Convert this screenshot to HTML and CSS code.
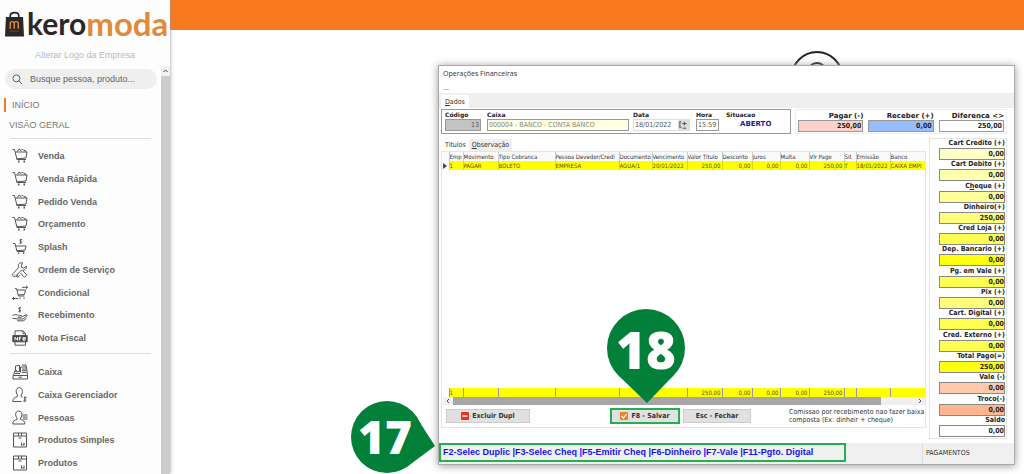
FILE: index.html
```html
<!DOCTYPE html>
<html lang="pt-BR">
<head>
<meta charset="utf-8">
<title>Keromoda - Operações Financeiras</title>
<link rel="stylesheet" href="styles.css">
</head>
<body>
<svg class="defs" aria-hidden="true">
  <symbol id="cart" viewBox="0 0 16 16"><path d="M.5 1.500h2l2.500 10h9M3.500 4h11.500l-1 6-9.500.8M5.500 3.500l1.500-2.500 2 1.500L10.500 1l1.500 1.500 1.500.2.500 1.300"/><path d="M6 13.500h1.500M11.500 13.500h1.500" stroke-width="2"/></symbol>
  <symbol id="cash-cart" viewBox="0 0 16 16"><path d="M1 4.500h2l2 8h7.500M4 7h10l-1 4-8 .7M10 .5C8-.2 7.200 1.700 8.700 2.300S9.500 4.600 7.500 4M8.700 0v5"/><path d="M6 14.300h1.300M11 14.300h1.300" stroke-width="1.600"/></symbol>
  <symbol id="tools" viewBox="0 0 16 16"><path d="M10.500.8C7 .3 5.500 3 6.600 5.600L.9 11.700c-1.400 1.800 1 3.900 2.700 2.500l5.900-6.100c2.800.9 5.400-1.300 4.800-4l-2.500 2-2-.6-.4-2zM8.500 11l3 3.500c1.500 1.300 3.800-.8 2.600-2.300L11 9M2.300 12.800h.7M6 12.500l-1.500 2 1.500.6 2-2"/></symbol>
  <symbol id="swap-cart" viewBox="0 0 16 16"><path d="M3 3.500h1.500l2 7.500h6M5 5h8.500l-1 4.500-6.500.5M10 2.300h5.500M14 .8l1.700 1.500L14 3.800M.5 13.500H6M2 12L.4 13.500 2 15"/><path d="M7.500 13.300h1M11.500 13.300h1" stroke-width="1.600"/></symbol>
  <symbol id="hand" viewBox="0 0 16 16"><path d="M9 .8C7-.2 6 2 7.600 2.600S9 5.200 6.500 4.500M7.700 0v5.500M.5 8.500c3-1.500 4.500-1 6 .2h3c1.200.2.800 1.500-.2 1.600H6M10.500 9.500l3.500-1.700c1-.3 1.600.4.900 1.200L11 12H6l-5.500-.7M5 13.800h6.500l3-2.500"/></symbol>
  <symbol id="nfe" viewBox="0 0 16 16"><path d="M3 6V.8h8l2.500 2.700V6M11 .8v3h2.500M3 12v3.200h10.500V12"/><path class="solid" d="M.8 5.500h14.400v6.300H.8z"/><path class="light" d="M3 10.300V7.200l2.500 3V7.200M7.300 10.500V7.200h2M7.300 8.800h1.600M11 8.900h2.500V7.700H11v2.500h2.500"/></symbol>
  <symbol id="register" viewBox="0 0 16 16"><path d="M1 11.500h14.500V15H1zM1.500 11.500L3 6.500h2M3.500 7.500V2l4-.8v6.500h-4M8.500 3h6l1 8.500M8.500 3v5.500M10 1h4v2M10 5h4M10 6.700h4.300M10 8.400h4.500M3 9.500h5M6.500 13.200h3.500"/></symbol>
  <symbol id="user-cash" viewBox="0 0 16 16"><path d="M7.300.7C3.300.7 3.700 6 5.500 8v1.500C2.500 10.500.8 11.500.8 14.500h8.700M7.300.7c4 0 3.600 5.300 1.800 7.300v1.500l1.500.6M14.500 10.500c-2-1-3.200 1-1.500 1.700s.5 2.600-1.800 1.800M12.900 9.500v5.500"/></symbol>
  <symbol id="user-list" viewBox="0 0 16 16"><path d="M6.800 1C2.800 1 3.200 6.200 5 8v1.500C2 10.300.8 11.200.8 14h12c0-2.800-1.300-3.700-4.200-4.500V8c1.800-1.800 2.200-7-1.800-7zM10.500 5h5M10.500 7h5M11 9h4.500"/></symbol>
  <symbol id="box" viewBox="0 0 16 16"><path d="M1.500 1h13v14h-13zM1.500 4h13M6.500 1v3M9.500 1v3M6.500 6h3M9.500 10.500v2.500M12 10.500v2.500M9 13h3.500"/></symbol>
</svg>

<div class="app">
  <aside class="sidebar">
    <a class="logo" href="#" aria-label="keromoda">
      <svg class="bag" viewBox="0 0 20 27"><path d="M5.500 7.500V4.300C5.500 0 14.500 0 14.500 4.300v3.200" fill="none" stroke="#2b2728" stroke-width="1.800"/><path d="M1 5.500h18L20 26H0z" fill="#2b2728"/><path d="M5.500 18v-5.500c0-2.700 4.200-2.700 4.200 0V18M9.700 12.500c0-2.700 4.300-2.700 4.300 0V18" fill="none" stroke="#e08a3c" stroke-width="1.500"/><path d="M5 20.500h10" stroke="#b06a30" stroke-width="1" stroke-dasharray="1 1"/></svg>
      <span class="kero">kero</span><span class="moda">moda</span>
    </a>
    <a class="change-logo" href="#">Alterar Logo da Empresa</a>
    <div class="side-body">
      <div class="side-content">
        <label class="search">
          <svg viewBox="0 0 12 12"><circle cx="4.800" cy="4.800" r="3.800"/><path d="M7.600 7.600l3.500 3.400"/></svg>
          <input type="text" aria-label="Busca" placeholder="Busque pessoa, produto...">
        </label>
        <nav>
          <a class="top-link active" href="#">INÍCIO</a>
          <a class="top-link" href="#">VISÃO GERAL</a>
          <ul class="menu">
            <li><a href="#"><svg><use href="#cart"/></svg>Venda</a></li>
            <li><a href="#"><svg><use href="#cart"/></svg>Venda Rápida</a></li>
            <li><a href="#"><svg><use href="#cart"/></svg>Pedido Venda</a></li>
            <li><a href="#"><svg><use href="#cart"/></svg>Orçamento</a></li>
            <li><a href="#"><svg><use href="#cash-cart"/></svg>Splash</a></li>
            <li><a href="#"><svg><use href="#tools"/></svg>Ordem de Serviço</a></li>
            <li><a href="#"><svg><use href="#swap-cart"/></svg>Condicional</a></li>
            <li><a href="#"><svg><use href="#hand"/></svg>Recebimento</a></li>
            <li><a href="#"><svg><use href="#nfe"/></svg>Nota Fiscal</a></li>
          </ul>
          <ul class="menu">
            <li><a href="#"><svg><use href="#register"/></svg>Caixa</a></li>
            <li><a href="#"><svg><use href="#user-cash"/></svg>Caixa Gerenciador</a></li>
            <li><a href="#"><svg><use href="#user-list"/></svg>Pessoas</a></li>
            <li><a href="#"><svg><use href="#box"/></svg>Produtos Simples</a></li>
            <li><a href="#"><svg><use href="#box"/></svg>Produtos</a></li>
          </ul>
        </nav>
      </div>
      <div class="side-scroll"><svg viewBox="0 0 8 10"><path d="M2 6l2-2 2 2"/></svg></div>
    </div>
  </aside>
  <main class="desktop">
    <div class="topbar"></div>
    <svg class="avatar" viewBox="0 0 52 52"><circle cx="26" cy="26" r="25"/><circle cx="26" cy="21" r="9"/></svg>
    <section class="window">
      <h1 class="title">Operações Financeiras</h1>
      <div class="menubar">...</div>
      <div class="tabstrip"><button class="tab"><u>D</u>ados</button></div>
      <div class="page">
        <div class="summary">
          <div class="box details">
            <label class="f-code">Código<input class="num" type="text" value="13"></label>
            <label class="f-cash">Caixa<input type="text" value="000004 - BANCO - CONTA BANCO"></label>
            <label class="f-date">Data<span class="date"><input type="text" value="18/01/2022"><button aria-label="Alterar data"><svg viewBox="0 0 11 11"><path d="M1 2h2M1.500 2v6M1 8h2M4 4h5M6.500 2v4M4.500 9h4"/></svg></button></span></label>
            <label class="f-time">Hora<input type="text" value="15:59"></label>
            <div class="f-status">Situacao<output>ABERTO</output></div>
          </div>
          <div class="totals">
            <label>Pagar (-)<input class="num pink" type="text" value="250,00"></label>
            <label>Receber (+)<input class="num blue" type="text" value="0,00"></label>
            <label>Diferenca &lt;&gt;<input class="num" type="text" value="250,00"></label>
          </div>
        </div>
        <div class="work">
          <div class="left">
            <div class="subtabs"><button class="on">Titulos</button><button><u>O</u>bservação</button></div>
            <div class="sheet">
              <div class="grid">
                <table>
                  <colgroup><col class="c6"><col class="c14"><col class="c35"><col class="c57"><col class="c64"><col class="c33"><col class="c35"><col class="c35"><col class="c30"><col class="c28"><col class="c29"><col class="c35"><col class="c12"><col class="c34"><col></colgroup>
                  <thead><tr><th></th><th>Emp</th><th>Movimento</th><th>Tipo Cobranca</th><th>Pessoa Devedor/Credi</th><th>Documento</th><th>Vencimento</th><th>Valor Titulo</th><th>Desconto</th><th>Juros</th><th>Multa</th><th>Vlr Pago</th><th>Sit</th><th>Emissão</th><th>Banco</th></tr></thead>
                  <tbody>
                    <tr class="row"><td><svg class="cursor" viewBox="0 0 4 6"><path d="M0 0l4 3-4 3z"/></svg></td><td>1</td><td>PAGAR</td><td>BOLETO</td><td>EMPRESA</td><td>AGUA/1</td><td>20/01/2022</td><td class="n">250,00</td><td class="n">0,00</td><td class="n">0,00</td><td class="n">0,00</td><td class="n">250,00</td><td>T</td><td>18/01/2022</td><td>CAIXA EMPI</td></tr>
                    <tr class="blank"><td colspan="15"></td></tr>
                  </tbody>
                  <tfoot><tr class="row"><td></td><td>1</td><td></td><td></td><td></td><td></td><td></td><td class="n">250,00</td><td class="n">0,00</td><td class="n">0,00</td><td class="n">0,00</td><td class="n">250,00</td><td></td><td></td><td></td></tr></tfoot>
                </table>
              </div>
              <div class="hscroll"><svg viewBox="0 0 8 8"><path d="M5 2L3 4l2 2"/></svg><span></span><svg viewBox="0 0 8 8"><path d="M3 2l2 2-2 2"/></svg></div>
              <div class="actions">
                <button><svg viewBox="0 0 8 8"><rect width="8" height="8" rx="1" fill="#ee2f24"/><path d="M1.500 4h5" stroke="#fff" stroke-width="1.500"/></svg>Excluir Dupl</button>
                <button class="save"><svg viewBox="0 0 8 8"><rect width="8" height="8" rx="1" fill="#f0802a"/><path d="M1.500 4l2 2 3-4" fill="none" stroke="#fff" stroke-width="1.200"/></svg>F8 - Salvar</button>
                <button class="close">Esc - Fechar</button>
                <p>Comissao por recebimento nao fazer baixa composta (Ex: dinheir + cheque)</p>
              </div>
            </div>
          </div>
          <div class="payments">
            <label>Cart Credito (+)<input class="num y1" type="text" value="0,00"></label>
            <label>Cart Debito (+)<input class="num y2" type="text" value="0,00"></label>
            <label><span>C<u>h</u>eque (+)</span><input class="num y3" type="text" value="0,00"></label>
            <label>Dinheiro(+)<input class="num y4" type="text" value="250,00"></label>
            <label>Cred Loja (+)<input class="num y5" type="text" value="0,00"></label>
            <label>Dep. Bancario (+)<input class="num y6" type="text" value="0,00"></label>
            <label>Pg. em Vale (+)<input class="num y5" type="text" value="0,00"></label>
            <label>Pix (+)<input class="num y4" type="text" value="0,00"></label>
            <label>Cart. Digital (+)<input class="num y5" type="text" value="0,00"></label>
            <label>Cred. Externo (+)<input class="num y5" type="text" value="0,00"></label>
            <label>Total Pago(=)<input class="num y6" type="text" value="250,00"></label>
            <label>Vale (-)<input class="num o1" type="text" value="0,00"></label>
            <label>Troco(-)<input class="num o2" type="text" value="0,00"></label>
            <label>Saldo<input class="num" type="text" value="0,00"></label>
          </div>
        </div>
      </div>
      <footer class="status">
        <div class="keys">F2-Selec Duplic |F3-Selec Cheq |F5-Emitir Cheq |F6-Dinheiro |F7-Vale |F11-Pgto. Digital</div>
        <div class="mode">PAGAMENTOS</div>
      </footer>
      <svg class="pin pin18" viewBox="0 0 78 94"><circle cx="39" cy="39" r="39"/><path d="M11.500 66.600h55L40 94z"/><text x="39" y="60">18</text></svg>
      <svg class="pin pin17" viewBox="0 0 84 72"><circle cx="36" cy="36" r="36"/><path d="M66 17L84 45 57 65z"/><text x="34" y="53">17</text></svg>
    </section>
  </main>
</div>
</body>
</html>
```
FILE: styles.css
```css
* { box-sizing: border-box; }
body { margin: 0; background: #fff; font-family: "Liberation Sans", Arial, sans-serif; }
button, input { font: inherit; color: inherit; margin: 0; padding: 0; border: 0; border-radius: 0; background: none; }
a { color: inherit; text-decoration: none; }
.defs { display: none; }
.app { display: flex; height: 100vh; overflow: hidden; }

/* sidebar */
.sidebar { flex: 0 0 170px; display: flex; flex-direction: column; background: #fdfdfd; box-shadow: 0 0 4px #999; z-index: 1; font-size: 9px; }
.logo { display: flex; align-items: flex-end; height: 42px; padding: 0 0 4px 5px; font-family: Lato, sans-serif; font-weight: 700; line-height: 30px; color: #2b2728; }
.bag { width: 19px; height: 27px; margin-right: 3px; }
.kero { font-size: 30px; }
.moda { color: #e08a3c; font-size: 33px; }
.change-logo { text-align: center; line-height: 12px; padding: 7px 0 5px; color: #bbb; }
.side-body { flex: 1; display: flex; min-height: 0; }
.side-content { flex: 1; min-width: 0; overflow: hidden; padding-top: 3px; }
.search { display: flex; align-items: center; gap: 7px; height: 20px; margin: 0 4px 0 5px; padding: 0 7px; border-radius: 10px; background: #efefef; }
.search svg { width: 11px; height: 11px; fill: none; stroke: #555; }
.search input { flex: 1; min-width: 0; outline: 0; color: #666; }
.search input::placeholder { color: #666; opacity: 1; }
.top-link { display: block; height: 20px; line-height: 20px; padding-left: 9px; color: #777; }
.top-link.active { margin: 9px 0 0 4px; height: 14px; line-height: 14px; padding-left: 6px; border-left: 2px solid #f97a1f; }
.top-link.active + .top-link { margin-top: 3px; }
.menu { list-style: none; margin: 3px 10px 0; padding: 5px 0 4px 2px; border-top: 1px solid #ddd; }
.menu + .menu { margin-top: 0; padding-top: 6px; }
.menu li { height: 23px; }
.menu li:nth-child(4n) { height: 22px; }
.menu a { display: flex; align-items: center; gap: 10px; height: 100%; color: #666; font-weight: 700; white-space: nowrap; }
.menu svg { width: 16px; height: 16px; fill: none; stroke: #555; stroke-width: 1; }
.solid { fill: #444; }
.light { stroke: #fff; stroke-width: 1; }
.side-scroll { flex: 0 0 9px; background: #cdcdcd; }
.side-scroll svg { display: block; width: 9px; height: 10px; background: #f1f1f1; fill: none; stroke: #444; }

/* desktop */
.desktop { flex: 1; position: relative; min-width: 0; }
.topbar { height: 30px; background: #f8791f; }
.avatar { position: absolute; left: 621px; top: 51px; width: 52px; height: 52px; fill: none; stroke: #222; stroke-width: 2; }
.window { position: absolute; left: 268px; right: 9px; top: 65px; bottom: 9px; display: flex; flex-direction: column; background: #fff; border: 1px solid #aaa; box-shadow: 0 1px 8px #999; font-family: "DejaVu Sans Condensed", "DejaVu Sans", sans-serif; font-size: 7px; color: #333; }
.title { margin: 0; padding: 2px 4px 0; font: 400 7px/12px "Open Sans", sans-serif; }
.menubar { height: 13px; padding-left: 4px; line-height: 16px; }
.tabstrip { display: flex; align-items: flex-end; height: 15px; background: #efefef; padding-left: 2px; }
.tab { height: 13px; padding: 0 4px; background: #fff; }
.page { flex: 1; display: flex; flex-direction: column; gap: 4px; min-height: 0; padding: 1px 7px 4px 2px; }
.summary { display: flex; gap: 4px; height: 25px; font: 700 6px/8px "DejaVu Sans", sans-serif; color: #222; }
.summary label, .f-status { display: flex; flex-direction: column; min-width: 0; }
.summary input { display: block; width: 100%; height: 12px; border: 1px solid #999; padding: 0 1px; }
.details { flex: 1; display: flex; border: 1px solid #999; padding: 1px 3px 0; }
.details input { font: 400 7px/10px "DejaVu Sans Condensed", sans-serif; color: #555; }
.details .f-code { flex: 0 0 36px; margin-right: 6px; }
.f-code input { background: #c3c3c3; }
.details .f-cash { flex: 0 0 142px; margin-right: 4px; }
.details .f-cash input { background: #ffffe1; color: #888; }
.details .f-date { flex: 0 0 57px; margin-right: 6px; }
.date { display: flex; border: 1px solid #ddd; height: 12px; }
.date input { flex: 1; border: 0; height: 10px; }
.date button { flex: 0 0 11px; background: #ddd; }
.date svg { display: block; width: 11px; height: 10px; fill: none; stroke: #444; }
.details .f-time { flex: 0 0 23px; margin-right: 7px; }
.f-status { flex: 1; }
.f-status output { padding-left: 14px; font-size: 7px; line-height: 11px; color: #1c1c96; }
.num { text-align: right; }
.totals { flex: 0 0 212px; display: grid; grid-template-columns: 1fr 1fr 1fr; gap: 5px; padding: 2px 2px 1px; border: 1px solid #eee; text-align: right; font-size: 7px; }
.totals input, .payments input { font: 700 7px/10px "DejaVu Sans Condensed", sans-serif; }
.pink { background: #fbd0cd; }
.blue { background: #96bcfb; }
.work { flex: 1; display: flex; gap: 3px; min-height: 0; }
.left { flex: 1; min-width: 0; display: flex; flex-direction: column; padding-bottom: 11px; }
.subtabs { display: flex; height: 13px; padding-left: 1px; }
.subtabs button { padding: 0 3px; background: #efefef; margin-top: 1px; }
.subtabs .on { background: #fff; margin-top: 0; }
.sheet { flex: 1; display: flex; flex-direction: column; min-height: 0; border: 1px solid #e5e5e5; padding: 0 0 3px 1px; }
.grid { flex: 1; min-height: 0; }
table { width: 100%; height: 100%; table-layout: fixed; border-collapse: collapse; font-size: 6px; line-height: 8px; }
th, td { height: 9px; padding: 0 1px 0 0; overflow: hidden; white-space: nowrap; text-align: left; font-weight: 400; border-left: 1px solid #ccc; }
th { background: #fafafa; }
th:first-child, td:first-child { border-left: 0; }
th:last-child, td:last-child { padding: 0; }
.row td:not(:first-child) { background: #ff0; border-left-color: #e0d800; color: #55500a; }
tfoot .row td:not(:first-child) { border-left-color: #999; }
.row .n { text-align: right; }
.blank td { height: auto; }
.cursor { display: block; width: 4px; height: 6px; fill: #444; }
.c6 { width: 6px; } .c12 { width: 12px; } .c14 { width: 14px; } .c28 { width: 28px; } .c29 { width: 29px; } .c30 { width: 30px; }
.c33 { width: 33px; } .c34 { width: 34px; } .c35 { width: 35px; } .c57 { width: 57px; } .c64 { width: 64px; }
.hscroll { display: flex; height: 8px; background: #f0f0f0; }
.hscroll svg { width: 10px; height: 8px; fill: none; stroke: #555; }
.hscroll span { flex: 1; background: #a6a6a6; margin-right: 34px; }
.actions { display: flex; align-items: center; padding-top: 3px; padding-left: 3px; }
.actions button { display: flex; align-items: center; justify-content: center; gap: 3px; width: 84px; height: 14px; background: #e1e1e1; border: 1px solid #ccc; font: 700 7px/8px "DejaVu Sans Condensed", sans-serif; color: #333; }
.actions button svg { width: 8px; height: 8px; }
.actions .save { width: 70px; height: 16px; margin-left: auto; border: 1px solid #22b14c; outline: 1px solid #22b14c; outline-offset: -2px; }
.actions .close { width: 68px; margin-left: 3px; }
.actions p { flex: 0 0 136px; margin: 0 0 0 38px; line-height: 8px; }
.payments { flex: 0 0 78px; display: flex; flex-direction: column; justify-content: space-between; padding: 0 1px 1px 9px; border: 1px solid #e5e5e5; font: 700 7px/9px "DejaVu Sans Condensed", sans-serif; color: #222; }
.payments label { display: flex; flex-direction: column; align-items: flex-end; white-space: nowrap; }
.payments input { width: 100%; height: 12px; border: 1px solid #888; }
.y1 { background: #ffffc8; } .y2 { background: #ffffae; } .y3 { background: #ffff98; } .y4 { background: #ffff7c; } .y5 { background: #ffff52; } .y6 { background: #ffff10; }
.o1 { background: #ffc9ae; } .o2 { background: #ffb690; }
.status { display: flex; align-items: stretch; height: 21px; background: #f0f0f0; }
.keys { flex: 0 1 407px; height: 19px; border: 2px solid #22b14c; padding: 0 2px; font: 700 9px/14px "Liberation Sans", sans-serif; color: #1414f0; white-space: nowrap; }
.mode { margin-left: auto; width: 92px; border-left: 1px solid #ddd; padding-left: 3px; line-height: 20px; }

/* step markers */
.pin { position: absolute; overflow: visible; fill: #027f38; }
.pin text { fill: #fff; font-family: "Open Sans", sans-serif; font-weight: 800; text-anchor: middle; }
.pin18 { left: 168px; top: 243px; width: 78px; height: 94px; font-size: 51px; }
.pin17 { left: -88px; top: 335px; width: 84px; height: 72px; font-size: 46px; }
```
